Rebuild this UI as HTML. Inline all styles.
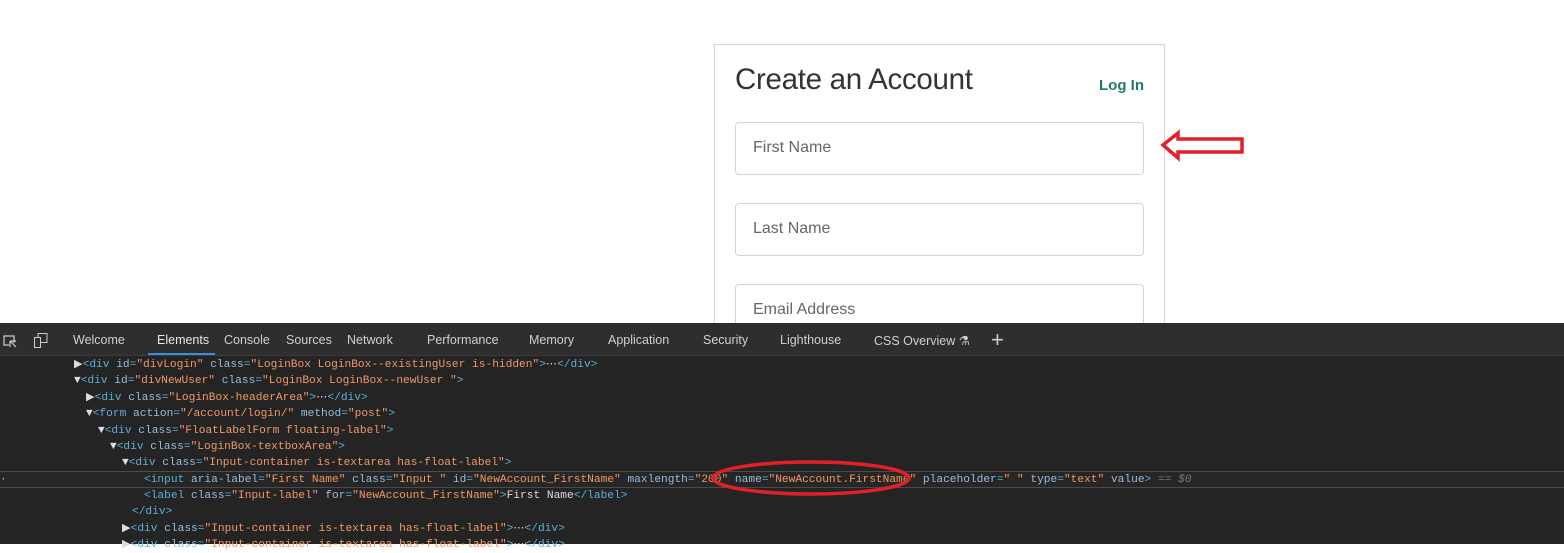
<!DOCTYPE html>
<html><head><meta charset="utf-8"><style>
*{margin:0;padding:0;box-sizing:border-box}
body{width:1564px;height:544px;overflow:hidden;background:#fff;position:relative;font-family:"Liberation Sans",sans-serif}
.card{position:absolute;left:714px;top:44px;width:451px;height:300px;border:1px solid #d6d6d6;border-bottom:none}
.title{position:absolute;left:735px;top:63px;font-size:29.5px;color:#333;letter-spacing:-0.3px}
.login{position:absolute;left:1099px;top:77px;font-size:15px;font-weight:bold;color:#1f7a70}
.inp{position:absolute;left:735px;width:409px;height:53px;border:1px solid #d3d3d3;border-radius:4px;font-size:16px;color:#666;padding:16px 0 0 17px}
.dt{position:absolute;left:0;top:323px;width:1564px;height:221px;background:#242424}
.tabs{position:absolute;left:0;top:0;width:1564px;height:33px;background:#2e2e2e;border-bottom:1px solid #3a3a3a;font-size:12.5px;color:#cfcfcf}
.tab{position:absolute;top:10px}
.code{position:absolute;left:0;top:34px;width:1564px;font-family:"Liberation Mono",monospace;font-size:11.2px;color:#5db0d7}
.row{position:absolute;height:16px;line-height:16px;white-space:pre}
.t{color:#5db0d7}.a{color:#9bbbdc}.v{color:#f29766}.x{color:#ddd}.g{color:#777;font-style:italic}
</style></head><body>
<div class="card"></div>
<div class="title">Create an Account</div>
<div class="login">Log In</div>
<div class="inp" style="top:122px">First Name</div>
<div class="inp" style="top:203px">Last Name</div>
<div class="inp" style="top:284px">Email Address</div>
<svg style="position:absolute;left:1158px;top:128px" width="90" height="36"><path d="M5 17 L20 5 L20 11 L84 11 L84 24 L20 24 L20 30 Z" fill="none" stroke="#e3202a" stroke-width="3.5" stroke-linejoin="miter"/></svg>
<div class="dt">
<div class="tabs">
<svg style="position:absolute;left:2px;top:10px" width="16" height="16"><path d="M12 10V3H2v9h5M8 8l6 6M8 8v6M8 8h6" fill="none" stroke="#ccc" stroke-width="1.2"/></svg>
<svg style="position:absolute;left:33px;top:9px" width="16" height="18"><rect x="1.5" y="5.5" width="6" height="10" fill="none" stroke="#ccc"/><path d="M5 5V1.5h9v9H8" fill="none" stroke="#ccc"/></svg>
<span class="tab" style="left:73px">Welcome</span>
<span class="tab" style="left:157px;color:#e8e8e8">Elements</span>
<div style="position:absolute;left:148px;top:30px;width:67px;height:2px;background:#3b8ed8"></div>
<span class="tab" style="left:224px">Console</span>
<span class="tab" style="left:286px">Sources</span>
<span class="tab" style="left:347px">Network</span>
<span class="tab" style="left:427px">Performance</span>
<span class="tab" style="left:529px">Memory</span>
<span class="tab" style="left:608px">Application</span>
<span class="tab" style="left:703px">Security</span>
<span class="tab" style="left:780px">Lighthouse</span>
<span class="tab" style="left:874px">CSS Overview ⚗</span>
<span class="tab" style="left:991px;top:4px;font-size:22px;font-weight:300">+</span>
</div>
<div class="code">
<div class="row" style="left:74px;top:0"><span class="x">▶</span>&lt;div <span class="a">id</span>=<span class="v">"divLogin"</span> <span class="a">class</span>=<span class="v">"LoginBox LoginBox--existingUser is-hidden"</span>&gt;<span class="x">⋯</span>&lt;/div&gt;</div>
<div class="row" style="left:74px;top:16px"><span class="x">▼</span>&lt;div <span class="a">id</span>=<span class="v">"divNewUser"</span> <span class="a">class</span>=<span class="v">"LoginBox LoginBox--newUser "</span>&gt;</div>
<div class="row" style="left:86px;top:33px"><span class="x">▶</span>&lt;div <span class="a">class</span>=<span class="v">"LoginBox-headerArea"</span>&gt;<span class="x">⋯</span>&lt;/div&gt;</div>
<div class="row" style="left:86px;top:49px"><span class="x">▼</span>&lt;form <span class="a">action</span>=<span class="v">"/account/login/"</span> <span class="a">method</span>=<span class="v">"post"</span>&gt;</div>
<div class="row" style="left:98px;top:66px"><span class="x">▼</span>&lt;div <span class="a">class</span>=<span class="v">"FloatLabelForm floating-label"</span>&gt;</div>
<div class="row" style="left:110px;top:82px"><span class="x">▼</span>&lt;div <span class="a">class</span>=<span class="v">"LoginBox-textboxArea"</span>&gt;</div>
<div class="row" style="left:122px;top:98px"><span class="x">▼</span>&lt;div <span class="a">class</span>=<span class="v">"Input-container is-textarea has-float-label"</span>&gt;</div>
<div style="position:absolute;left:0;top:114px;width:1564px;height:17px;border-top:1px solid #4a4a4a;border-bottom:1px solid #4a4a4a;background:#262626"></div>
<div class="row" style="left:0;top:115px;color:#aaa">·</div>
<div class="row" style="left:144px;top:115px">&lt;input <span class="a">aria-label</span>=<span class="v">"First Name"</span> <span class="a">class</span>=<span class="v">"Input "</span> <span class="a">id</span>=<span class="v">"NewAccount_FirstName"</span> <span class="a">maxlength</span>=<span class="v">"200"</span> <span class="a">name</span>=<span class="v">"NewAccount.FirstName"</span> <span class="a">placeholder</span>=<span class="v">" "</span> <span class="a">type</span>=<span class="v">"text"</span> <span class="a">value</span>&gt; <span class="g">== $0</span></div>
<div class="row" style="left:144px;top:131px">&lt;label <span class="a">class</span>=<span class="v">"Input-label"</span> <span class="a">for</span>=<span class="v">"NewAccount_FirstName"</span>&gt;<span class="x">First Name</span>&lt;/label&gt;</div>
<div class="row" style="left:132px;top:147px">&lt;/div&gt;</div>
<div class="row" style="left:122px;top:164px"><span class="x">▶</span>&lt;div <span class="a">class</span>=<span class="v">"Input-container is-textarea has-float-label"</span>&gt;<span class="x">⋯</span>&lt;/div&gt;</div>
<div class="row" style="left:122px;top:180px"><span class="x">▶</span>&lt;div <span class="a">class</span>=<span class="v">"Input-container is-textarea has-float-label"</span>&gt;<span class="x">⋯</span>&lt;/div&gt;</div>
</div>
<svg style="position:absolute;left:710px;top:136px" width="205" height="40"><ellipse cx="101" cy="19" rx="98" ry="16" fill="none" stroke="#e3202a" stroke-width="3.5"/></svg>
</div>
</body></html>
